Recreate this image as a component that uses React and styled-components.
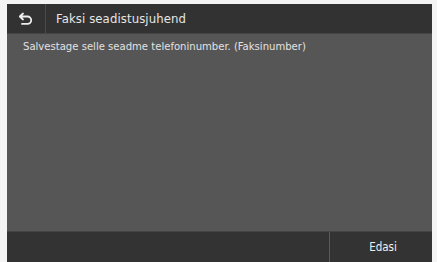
import React from 'react';
import styled, { createGlobalStyle } from 'styled-components';

const GlobalStyle = createGlobalStyle`
  html, body {
    margin: 0;
    padding: 0;
    background: #f4f4f4;
  }
  body {
    font-family: "Liberation Sans Narrow", "DejaVu Sans Condensed", "Liberation Sans", sans-serif;
  }
`;

const Page = styled.div`
  width: 437px;
  height: 262px;
  padding: 4px 5px 0 7px;
  box-sizing: border-box;
`;

const Screen = styled.div`
  height: 100%;
  display: flex;
  flex-direction: column;
  background: #565656;
`;

const Header = styled.div`
  height: 29px;
  display: flex;
  align-items: stretch;
  background: #323232;
  border-bottom: 1px solid #444;
`;

const BackButton = styled.div`
  width: 38px;
  display: flex;
  align-items: center;
  justify-content: center;
  border-right: 1px solid #4a4a4a;
`;

const Title = styled.div`
  display: flex;
  align-items: center;
  padding-left: 10px;
  color: #e6e6e6;
  font-size: 13px;
  letter-spacing: 0.1px;
`;

const Body = styled.div`
  flex: 1;
  padding: 6px 16px;
  color: #e2e2e2;
  font-size: 11.2px;
`;

const Footer = styled.div`
  height: 30px;
  display: flex;
  background: #333;
  border-top: 1px solid #444;
`;

const FooterSpacer = styled.div`
  flex: 1;
  border-right: 1px solid #5a5a5a;
`;

const FooterButton = styled.div`
  width: 102px;
  display: flex;
  align-items: center;
  justify-content: center;
  color: #f0f0f0;
  font-size: 11.5px;
  padding-left: 4px;
  box-sizing: border-box;
`;

const BackIcon = () => (
  <svg width="16" height="14" viewBox="0 0 16 14" fill="none">
    <path
      d="M5 1.5 1.8 4.5 5 7.5M2 4.5h7.5a3.7 3.7 0 0 1 0 7.4H4"
      stroke="#eeeeee"
      strokeWidth="1.8"
      strokeLinecap="round"
      strokeLinejoin="round"
    />
  </svg>
);

const App = () => (
  <Page>
    <GlobalStyle />
    <Screen>
      <Header>
        <BackButton>
          <BackIcon />
        </BackButton>
        <Title>Faksi seadistusjuhend</Title>
      </Header>
      <Body>Salvestage selle seadme telefoninumber. (Faksinumber)</Body>
      <Footer>
        <FooterSpacer />
        <FooterButton>Edasi</FooterButton>
      </Footer>
    </Screen>
  </Page>
);

export default App;
